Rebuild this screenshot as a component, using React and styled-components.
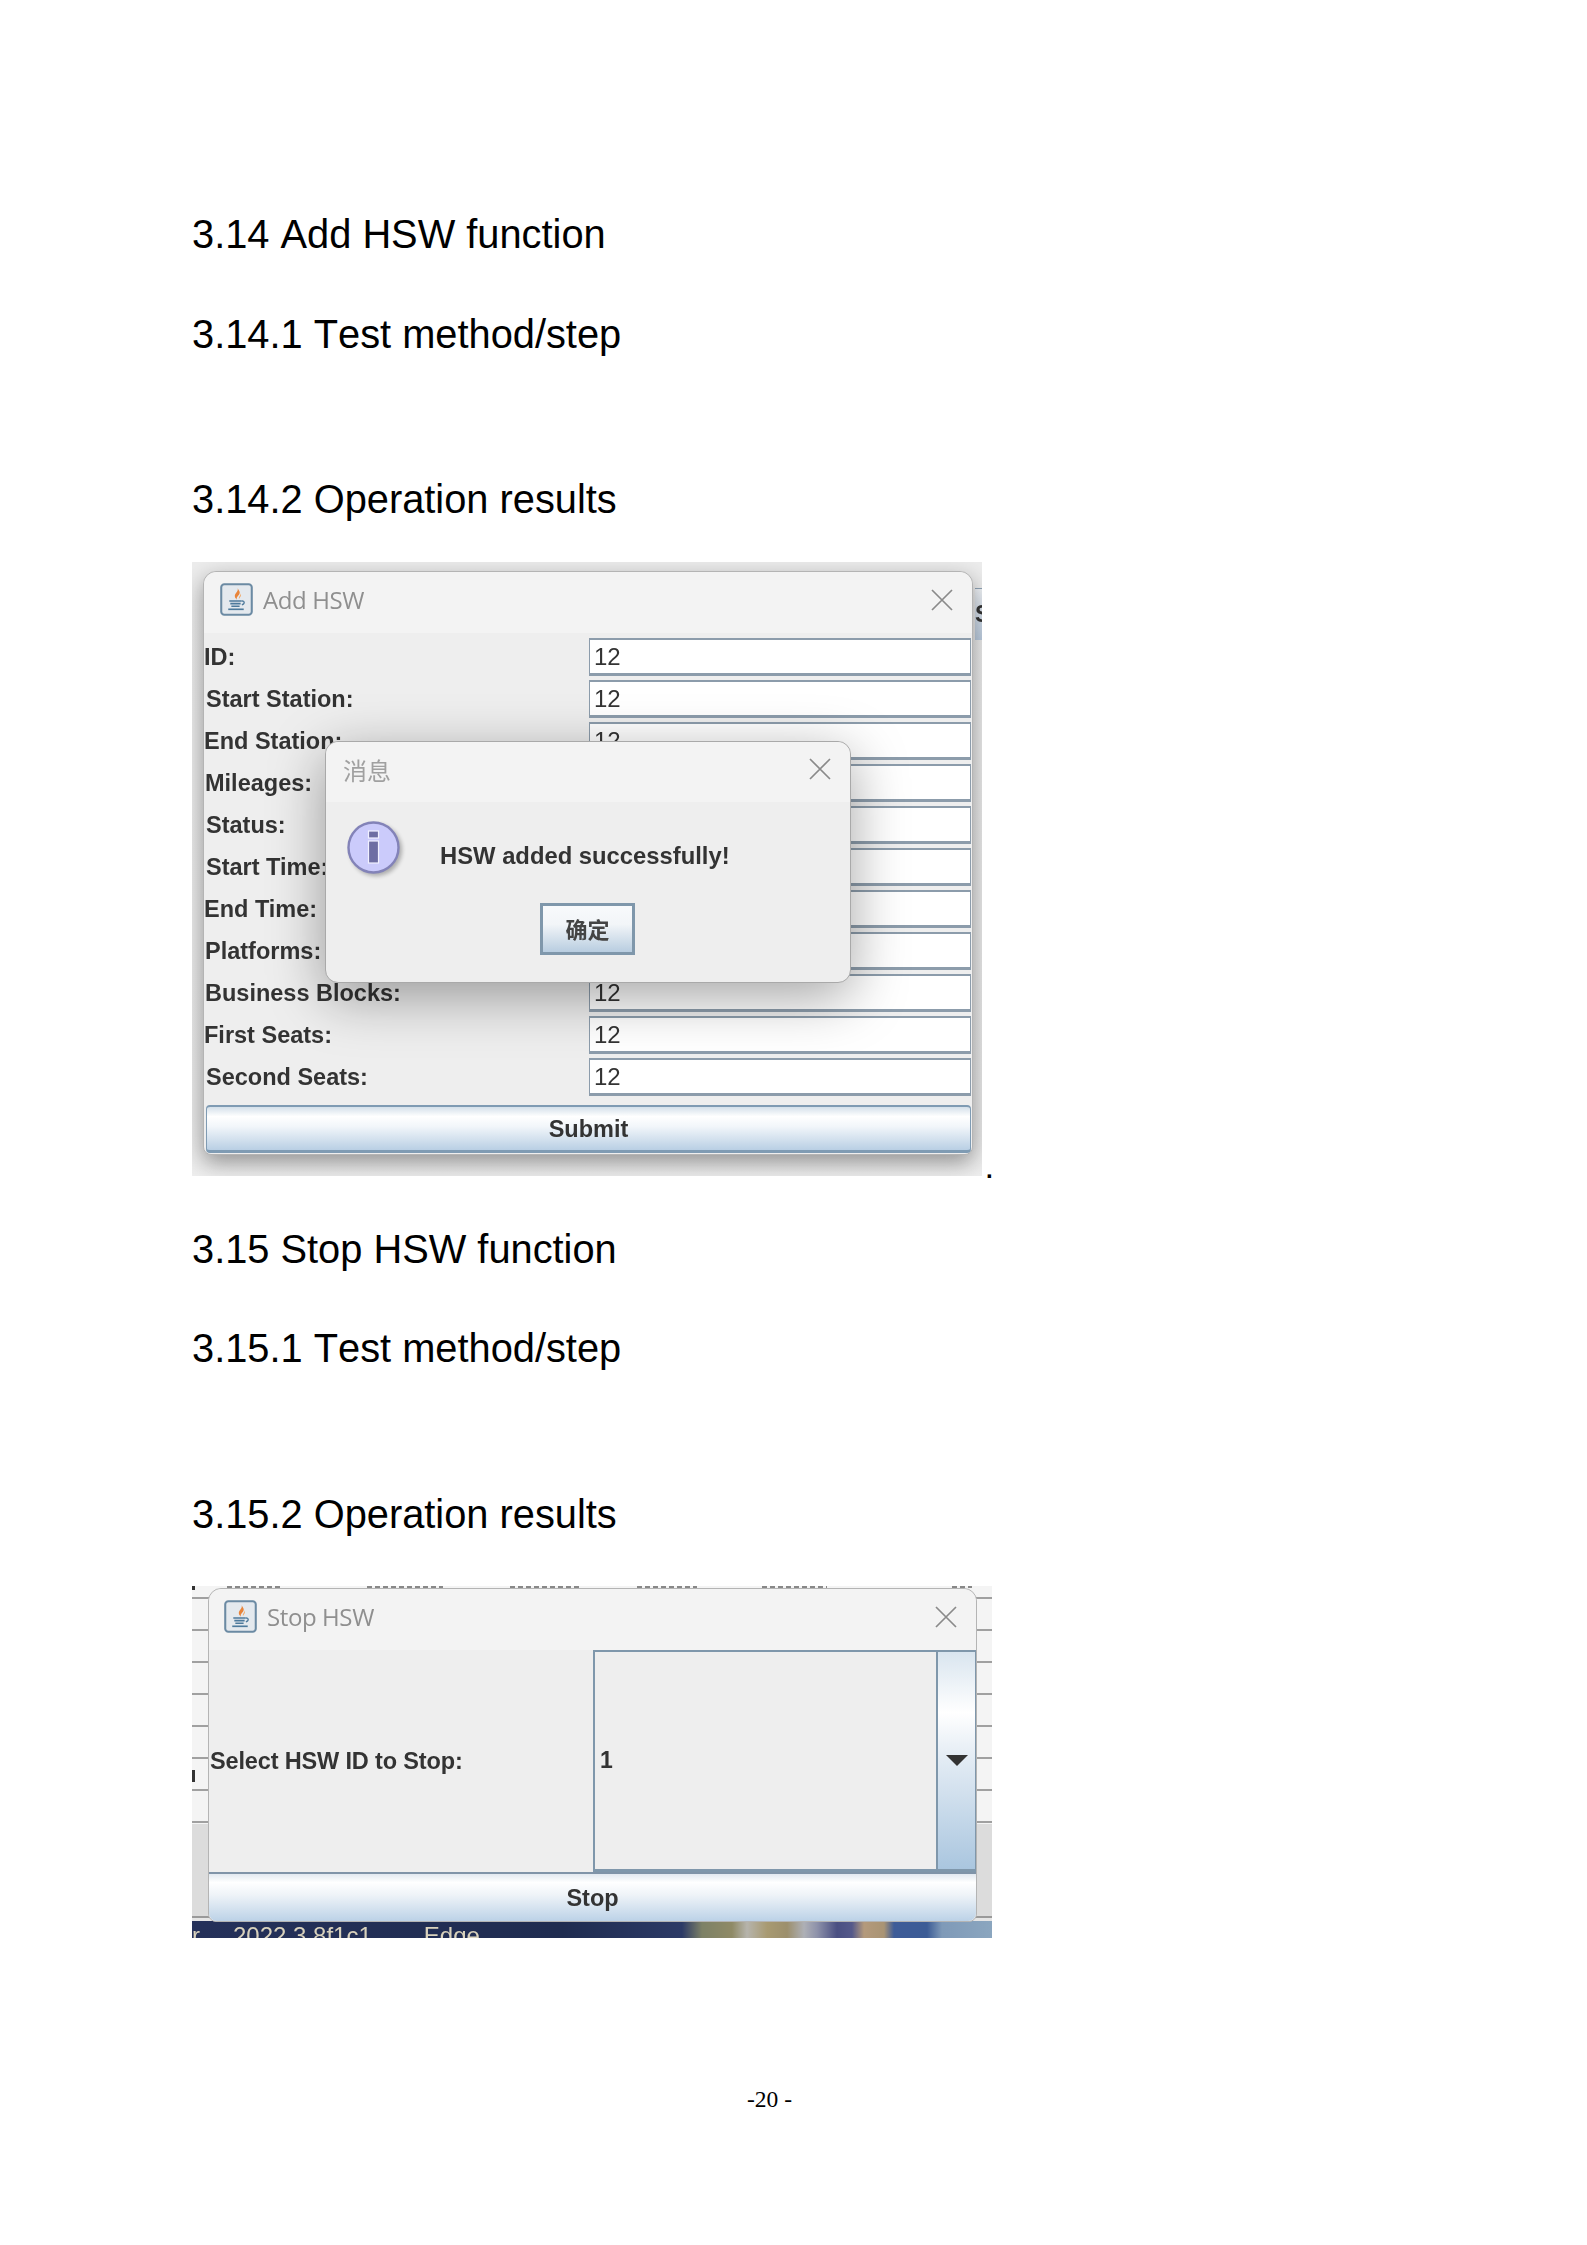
import React from "react";
import styled, { createGlobalStyle } from "styled-components";

const GlobalStyle = createGlobalStyle`
  html, body {
    margin: 0;
    padding: 0;
    background: #fff;
  }
`;

const Page = styled.div`
  box-sizing: border-box;
  width: 1587px;
  height: 2245px;
  padding: 210px 0 0 192px;
  font-family: "Liberation Sans", Arial, sans-serif;
  color: #000;
  overflow: hidden;
`;

const Heading = styled.h2`
  margin: ${({ mt }) => (mt ? mt : "0")} 0 0;
  font-size: 39.8px;
  line-height: 48px;
  font-weight: 400;
  font-kerning: none;
`;

const FigureRow = styled.div`
  display: flex;
  align-items: flex-end;
  margin-top: ${({ mt }) => mt};
`;

const Period = styled.span`
  margin-left: 4px;
  font-family: "Liberation Sans", Arial, sans-serif;
  font-size: 24px;
  font-weight: 700;
  line-height: 12px;
`;

const AddShot = styled.div`
  position: relative;
  box-sizing: border-box;
  width: 790px;
  height: 614px;
  padding: 9px 0 0 11px;
  background: linear-gradient(to bottom, #ececec 0%, #e9e9e9 90%, #efefef 100%);
  overflow: hidden;
  filter: blur(0.6px);
`;

const Stub = styled.div`
  position: absolute;
  top: 26px;
  right: 0;
  width: 7px;
  height: 51px;
  overflow: hidden;
  background: linear-gradient(to bottom, #eef1f5, #bccde0);
  border-top: 1px solid #8fa3b5;
  font-size: 23px;
  font-weight: 700;
  line-height: 50px;
  color: #333;
`;

const Window = styled.div`
  position: relative;
  z-index: 1;
  box-sizing: border-box;
  width: ${({ w }) => w};
  height: ${({ h }) => h};
  border: 1px solid #b4b4b4;
  border-radius: 13px 13px 8px 8px;
  background: #eeeeee;
  box-shadow: ${({ shadow }) => (shadow ? "0 8px 22px rgba(0, 0, 0, 0.38)" : "none")};
`;

const TitleBar = styled.div`
  box-sizing: border-box;
  display: flex;
  align-items: center;
  height: ${({ h }) => h};
  padding: 0 ${({ pr }) => pr} 6px ${({ pl }) => pl};
  background: #f3f3f3;
  border-radius: 13px 13px 0 0;
`;

const TitleText = styled.span`
  margin-left: 10px;
  flex: 1;
  font-family: "Open Sans", "Noto Sans", sans-serif;
  font-size: 24px;
  letter-spacing: -0.4px;
  color: #8f8f8f;
`;

const DialogTitle = styled.span`
  flex: 1;
  font-family: "Noto Sans CJK SC", sans-serif;
  font-size: 24px;
  color: #a0a0a0;
`;

const FormGrid = styled.div`
  display: grid;
  grid-template-columns: 385px 382px;
  row-gap: 4px;
  padding-top: 5px;
`;

const FieldLabel = styled.div`
  display: flex;
  align-items: center;
  height: 38px;
  padding-left: ${({ indent }) => indent}px;
  font-size: 23.5px;
  font-weight: 700;
  color: #333;
`;

const Field = styled.div`
  box-sizing: border-box;
  height: 38px;
  padding-left: 4px;
  border: solid #8c9cab;
  border-width: 2px 1px 3px;
  background: #fff;
  font-size: 24px;
  line-height: 33px;
  color: #333;
`;

const SubmitButton = styled.div`
  box-sizing: border-box;
  width: 765px;
  height: 48px;
  margin: 9px 0 0 2px;
  border: solid #7f9bb3;
  border-width: 2px 1px 3px;
  border-radius: 4px;
  background: linear-gradient(to bottom, #d4e0ea 0%, #ffffff 22%, #f2f6fa 45%, #b9cfe4 100%);
  text-align: center;
  font-size: 23.5px;
  font-weight: 700;
  line-height: 44px;
  color: #333;
`;

const Dialog = styled.div`
  position: absolute;
  top: 169px;
  left: 121px;
  box-sizing: border-box;
  width: 526px;
  height: 242px;
  border: 1px solid #a9a9a9;
  border-radius: 13px;
  background: #eeeeee;
  box-shadow: 0 14px 55px rgba(0, 0, 0, 0.36);
`;

const DialogBody = styled.div`
  display: flex;
  flex-direction: column;
  padding: 19px 0 0 21px;
`;

const MessageRow = styled.div`
  display: flex;
  align-items: flex-start;
`;

const Message = styled.span`
  margin: 19px 0 0 41px;
  font-size: 23.8px;
  font-weight: 700;
  line-height: 32px;
  color: #333;
`;

const ConfirmButton = styled.div`
  box-sizing: border-box;
  width: 95px;
  height: 52px;
  margin: 22px 0 0 193px;
  border: 3px solid #7f97ab;
  background: linear-gradient(to bottom, #f8fafc 0%, #f2f5f8 40%, #b8cde0 100%);
  text-align: center;
  font-family: "Noto Sans CJK SC", sans-serif;
  font-size: 22px;
  font-weight: 700;
  line-height: 44px;
  color: #444;
`;

const StopShot = styled.div`
  position: relative;
  box-sizing: border-box;
  width: 800px;
  height: 352px;
  padding: 2px 0 0 16px;
  overflow: hidden;
  filter: blur(0.6px);
  background:
    repeating-linear-gradient(to bottom, #f4f4f4 0 11px, #a0a0a0 11px 13px, #f4f4f4 13px 32px) 0 0 / 100% 238px no-repeat,
    linear-gradient(to bottom, #dcdcdc 0 330px, #9a9a9a 330px 332px, #e6e6e6 332px);
`;

const ClippedHeader = styled.div`
  position: absolute;
  top: 0;
  left: 0;
  width: 100%;
  height: 2px;
  background:
    repeating-linear-gradient(to right, #888 0 5px, transparent 5px 8px) 35px 0 / 53px 100% no-repeat,
    repeating-linear-gradient(to right, #888 0 5px, transparent 5px 8px) 175px 0 / 76px 100% no-repeat,
    repeating-linear-gradient(to right, #888 0 5px, transparent 5px 8px) 318px 0 / 70px 100% no-repeat,
    repeating-linear-gradient(to right, #888 0 5px, transparent 5px 8px) 445px 0 / 60px 100% no-repeat,
    repeating-linear-gradient(to right, #888 0 5px, transparent 5px 8px) 570px 0 / 65px 100% no-repeat,
    repeating-linear-gradient(to right, #888 0 5px, transparent 5px 8px) 760px 0 / 20px 100% no-repeat;
`;

const EdgeMark = styled.div`
  position: absolute;
  top: ${({ top }) => top}px;
  left: 0;
  width: 3px;
  height: ${({ h }) => h}px;
  background: #333;
`;

const DesktopStrip = styled.div`
  position: absolute;
  left: 0;
  right: 0;
  bottom: 0;
  display: flex;
  height: 17px;
  overflow: hidden;
  background: linear-gradient(
    to right,
    #25315a 0,
    #1f2c50 370px,
    #2c3a66 490px,
    #7d8166 510px,
    #8f8a66 540px,
    #b6b4ac 555px,
    #a89a72 575px,
    #9c8f6c 595px,
    #aeb0b6 612px,
    #8e92aa 625px,
    #4a4f82 645px,
    #55598a 660px,
    #b49a7c 672px,
    #a99474 692px,
    #3e5c98 702px,
    #3c5c96 735px,
    #7f9ab8 750px,
    #8ba6bf 800px
  );
  font-size: 24px;
  line-height: 30px;
  color: #d9d2bd;
`;

const StripText = styled.span`
  margin-left: ${({ ml }) => ml}px;
  white-space: nowrap;
`;

const SelectGrid = styled.div`
  display: grid;
  grid-template-columns: 384px 1fr;
  height: 222px;
`;

const SelectLabel = styled.div`
  display: flex;
  align-items: center;
  padding-left: 1px;
  font-size: 23.5px;
  font-weight: 700;
  letter-spacing: -0.15px;
  color: #333;
`;

const ComboBox = styled.div`
  box-sizing: border-box;
  display: flex;
  border: solid #7f97ab;
  border-width: 2px 1px 3px 2px;
`;

const ComboValue = styled.div`
  flex: 1;
  display: flex;
  align-items: center;
  padding-left: 5px;
  border-right: 2px solid #7f97ab;
  font-size: 23px;
  font-weight: 700;
  color: #333;
`;

const ComboArrow = styled.div`
  display: flex;
  align-items: center;
  justify-content: center;
  width: 37px;
  background: linear-gradient(to bottom, #d9e5ef 0%, #ffffff 28%, #e8eff6 45%, #aac6df 100%);
`;

const StopButton = styled.div`
  box-sizing: border-box;
  height: 49px;
  border-top: 2px solid #8094a8;
  border-radius: 0 0 8px 8px;
  background: linear-gradient(to bottom, #e2e9f0 0%, #ffffff 18%, #eef3f8 45%, #bcd2e7 100%);
  text-align: center;
  font-size: 23.5px;
  font-weight: 700;
  line-height: 49px;
  color: #333;
`;

const PageNumber = styled.div`
  margin: 146px 0 0 555px;
  font-family: "Liberation Serif", "Times New Roman", serif;
  font-size: 23.5px;
  line-height: 30px;
  white-space: pre;
`;

const JavaIcon = () => (
  <svg width="33" height="33" viewBox="0 0 32 32">
    <rect x="1.2" y="1.2" width="29.6" height="29.6" rx="3" fill="#e4e9ee" stroke="#6b8aa3" strokeWidth="2" />
    <path d="M17 5c1.5 3-3.5 5-2.5 8.5.4 1.3 1.5 2 2 2.5-1.5-2.5 3.5-4.5 2.5-7.5-.4-1.2-1.2-2.4-2-3.5z" fill="#e8843a" />
    <path d="M20 10c.5 2-2.5 3.5-1.5 5.5.7-1.8 2.8-2.8 1.5-5.5z" fill="#f0a868" />
    <path d="M9 17.5h12M10 20h10M11 22.5h8" stroke="#4d7a9c" strokeWidth="1.6" fill="none" />
    <path d="M21 17.5c3-.6 3.4 2.8.2 3.6" stroke="#4d7a9c" strokeWidth="1.3" fill="none" />
    <path d="M8 25.5h15" stroke="#4d7a9c" strokeWidth="1.6" />
  </svg>
);

const CloseIcon = ({ size = 22, color = "#8a8a8a" }) => (
  <svg width={size} height={size} viewBox="0 0 22 22">
    <path d="M1 1l20 20M21 1L1 21" stroke={color} strokeWidth="1.7" fill="none" />
  </svg>
);

const InfoIcon = () => (
  <svg width="60" height="60" viewBox="0 0 60 60" style={{ flex: "none", marginRight: "-8px" }}>
    <defs>
      <filter id="infoShadow" x="-20%" y="-20%" width="150%" height="150%">
        <feGaussianBlur stdDeviation="2.2" />
      </filter>
    </defs>
    <circle cx="29" cy="29" r="26" fill="#000" opacity="0.28" filter="url(#infoShadow)" />
    <circle cx="26.5" cy="26.5" r="25" fill="#cbcbfb" stroke="#8383b8" strokeWidth="2.4" />
    <rect x="21.5" y="10" width="10" height="7" fill="#6e6ea3" stroke="#f1f1ff" strokeWidth="1.2" />
    <rect x="21.5" y="20" width="10" height="22" fill="#6e6ea3" stroke="#f1f1ff" strokeWidth="1.2" />
  </svg>
);

const ArrowIcon = () => (
  <svg width="22" height="11" viewBox="0 0 22 11">
    <path d="M0 0h22L11 11z" fill="#333" />
  </svg>
);

const fields = [
  ["ID:", 0],
  ["Start Station:", 2],
  ["End Station:", 0],
  ["Mileages:", 1],
  ["Status:", 2],
  ["Start Time:", 2],
  ["End Time:", 0],
  ["Platforms:", 1],
  ["Business Blocks:", 1],
  ["First Seats:", 0],
  ["Second Seats:", 2],
];

export default function App() {
  return (
    <Page>
      <GlobalStyle />
      <Heading>3.14 Add HSW function</Heading>
      <Heading mt="52px">3.14.1 Test method/step</Heading>
      <Heading mt="117px">3.14.2 Operation results</Heading>

      <FigureRow mt="39px">
        <AddShot>
          <Stub>S</Stub>
          <Window w="770px" h="584px" shadow>
            <TitleBar h="61px" pl="16px" pr="19px">
              <JavaIcon />
              <TitleText>Add HSW</TitleText>
              <CloseIcon />
            </TitleBar>
            <FormGrid>
              {fields.map(([label, indent]) => (
                <React.Fragment key={label}>
                  <FieldLabel indent={indent}>{label}</FieldLabel>
                  <Field>12</Field>
                </React.Fragment>
              ))}
            </FormGrid>
            <SubmitButton>Submit</SubmitButton>
            <Dialog>
              <TitleBar h="60px" pl="17px" pr="19px">
                <DialogTitle>消息</DialogTitle>
                <CloseIcon />
              </TitleBar>
              <DialogBody>
                <MessageRow>
                  <InfoIcon />
                  <Message>HSW added successfully!</Message>
                </MessageRow>
                <ConfirmButton>确定</ConfirmButton>
              </DialogBody>
            </Dialog>
          </Window>
        </AddShot>
        <Period>.</Period>
      </FigureRow>

      <Heading mt="49px">3.15 Stop HSW function</Heading>
      <Heading mt="51px">3.15.1 Test method/step</Heading>
      <Heading mt="118px">3.15.2 Operation results</Heading>

      <FigureRow mt="48px">
        <StopShot>
          <ClippedHeader />
          <EdgeMark top={0} h={4} />
          <EdgeMark top={184} h={12} />
          <DesktopStrip>
            <StripText ml={0}>r</StripText>
            <StripText ml={33}>2022.3.8f1c1</StripText>
            <StripText ml={52}>Edge</StripText>
          </DesktopStrip>
          <Window w="769px" h="334px">
            <TitleBar h="61px" pl="15px" pr="19px">
              <JavaIcon />
              <TitleText>Stop HSW</TitleText>
              <CloseIcon />
            </TitleBar>
            <SelectGrid>
              <SelectLabel>Select HSW ID to Stop:</SelectLabel>
              <ComboBox>
                <ComboValue>1</ComboValue>
                <ComboArrow>
                  <ArrowIcon />
                </ComboArrow>
              </ComboBox>
            </SelectGrid>
            <StopButton>Stop</StopButton>
          </Window>
        </StopShot>
      </FigureRow>

      <PageNumber>-20 -</PageNumber>
    </Page>
  );
}
